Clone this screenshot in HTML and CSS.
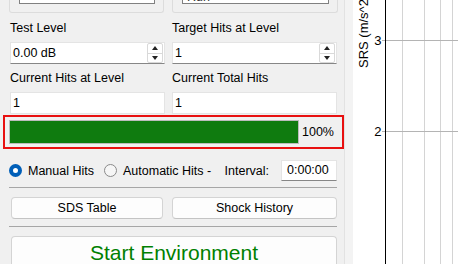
FILE: index.html
```html
<!DOCTYPE html>
<html lang="en">
<head>
  <meta charset="UTF-8" />
  <title>Shock Control</title>
  <link rel="stylesheet" href="styles.css">
</head>
<body>
  <div class="window">
    <div class="panel">
      <div class="groups">
        <div class="group g1"><div class="inner"></div></div>
        <div class="group g2"><div class="inner"><span class="combo-text">Run</span></div></div>
      </div>

      <div class="fields">
        <div class="label">Test Level</div>
        <div class="label">Target Hits at Level</div>
        <div class="spin">
          <span>0.00 dB</span>
          <div class="arrows"><i class="up"></i><i class="down"></i></div>
        </div>
        <div class="spin">
          <span>1</span>
          <div class="arrows"><i class="up"></i><i class="down"></i></div>
        </div>
        <div class="label">Current Hits at Level</div>
        <div class="label">Current Total Hits</div>
        <div class="field">1</div>
        <div class="field">1</div>
      </div>

      <div class="progress-frame">
        <div class="bar"><div class="fill" style="width: 100%"></div></div>
        <span class="percent">100%</span>
      </div>

      <div class="mode-row">
        <span class="radio checked"></span>
        <span class="radio-label">Manual Hits</span>
        <span class="radio"></span>
        <span class="radio-label">Automatic Hits -</span>
        <span class="interval">Interval:</span>
        <div class="time">0:00:00</div>
      </div>

      <div class="sep"></div>

      <div class="buttons">
        <button class="btn sds">SDS Table</button>
        <button class="btn history">Shock History</button>
      </div>

      <div class="sep second"></div>

      <button class="btn start">Start Environment</button>
    </div>

    <div class="splitter"></div>

    <div class="plot">
      <svg width="105" height="264" viewBox="0 0 105 264">
        <!-- vertical grid (log frequency) -->
        <g stroke="#d4d4d4" stroke-width="1">
          <line x1="49.5" y1="0" x2="49.5" y2="264" />
          <line x1="71.5" y1="0" x2="71.5" y2="264" />
          <line x1="87.5" y1="0" x2="87.5" y2="264" />
          <line x1="99.5" y1="0" x2="99.5" y2="264" />
        </g>
        <!-- horizontal grid -->
        <g stroke="#b4b4b4" stroke-width="1">
          <line x1="29" y1="40.5" x2="105" y2="40.5" />
          <line x1="29" y1="131.5" x2="105" y2="131.5" />
        </g>
        <line x1="32.5" y1="0" x2="32.5" y2="264" stroke="#000" stroke-width="1" />
        <g class="tick">
          <text x="28.5" y="45" text-anchor="end">3</text>
          <text x="28.5" y="136" text-anchor="end">2</text>
        </g>
        <text class="axis-label" transform="translate(14.5 68) rotate(-90)">SRS (m/s^2)</text>
      </svg>
    </div>
  </div>
</body>
</html>
```

FILE: styles.css
```css
body {
  margin: 0;
  font-family: "Liberation Sans", Arial, sans-serif;
  font-size: 12.5px;
  color: #000;
  background-color: #f0f0f0;
}
.window {
  display: flex;
  width: 458px;
  height: 264px;
  overflow: hidden;
}
.panel {
  width: 344px;
  flex: none;
  background-color: #f0f0f0;
}

/* group boxes cut off at the top */
.groups {
  display: flex;
  height: 13px;
  margin-left: 9px;
  gap: 8px;
}
.group {
  box-sizing: border-box;
  height: 13px;
  border: 1px solid #dcdcdc;
  border-top: none;
  border-radius: 0 0 3px 3px;
}
.g1 {
  width: 155px;
}
.g2 {
  width: 166px;
}
.inner {
  box-sizing: border-box;
  height: 4px;
  margin: 0 8px 0 9px;
  border: 1px solid #808080;
  border-top: none;
  background-color: #fff;
  overflow: hidden;
  position: relative;
}
.combo-text {
  position: absolute;
  left: 4px;
  bottom: 0;
  line-height: 12px;
  color: #333;
}

/* spin boxes and line edits */
.fields {
  display: grid;
  grid-template-columns: 155px 165px;
  grid-template-rows: 14px 22px 14px 22px;
  column-gap: 7px;
  row-gap: 7px;
  margin: 8px 0 0 10px;
}
.label {
  line-height: 14px;
  white-space: nowrap;
}
.spin,
.field {
  box-sizing: border-box;
  display: flex;
  align-items: center;
  background-color: #fff;
  border: 1px solid #e4e4e4;
  padding-left: 2px;
}
.spin {
  border-bottom-color: #868686;
  justify-content: space-between;
  padding-right: 1px;
}
.arrows {
  display: flex;
  flex-direction: column;
  width: 14px;
  height: 18px;
  border: 1px solid #d9d9d9;
  border-radius: 2px;
}
.arrows i {
  flex: 1;
  display: flex;
  align-items: center;
  justify-content: center;
}
.arrows i.up {
  border-bottom: 1px solid #d9d9d9;
}
.arrows i::before {
  content: "";
  border-left: 3px solid transparent;
  border-right: 3px solid transparent;
}
.arrows i.up::before {
  border-bottom: 4px solid #222;
}
.arrows i.down::before {
  border-top: 4px solid #222;
}

/* progress */
.progress-frame {
  box-sizing: border-box;
  display: flex;
  align-items: center;
  width: 341px;
  height: 34px;
  margin: 1px 0 0 3px;
  padding-left: 4px;
  border: 2px solid #e81010;
}
.bar {
  box-sizing: border-box;
  width: 290px;
  height: 24px;
  border: 1px solid #bcbcbc;
  background-color: #e6e6e6;
}
.fill {
  height: 100%;
  background-color: #0f7b0f;
}
.percent {
  margin-left: 3px;
}

/* hit mode */
.mode-row {
  display: flex;
  align-items: center;
  width: 328px;
  height: 21px;
  margin: 11px 0 0 9px;
}
.radio {
  box-sizing: border-box;
  width: 13px;
  height: 13px;
  border-radius: 50%;
  border: 1px solid #8a8a8a;
  background-color: #f6f6f6;
  flex: none;
}
.radio.checked {
  border: 4px solid #005fb8;
  background-color: #fff;
}
.radio-label {
  margin: 0 10px 0 6px;
  white-space: nowrap;
}
.interval {
  margin-left: auto;
  margin-right: 12px;
}
.time {
  box-sizing: border-box;
  width: 56px;
  height: 21px;
  padding-left: 5px;
  line-height: 19px;
  background-color: #fff;
  border: 1px solid #e4e4e4;
  border-bottom-color: #868686;
}

.sep {
  width: 328px;
  height: 1px;
  margin: 6px 0 0 9px;
  background-color: #a6a6a6;
}
.sep.second {
  margin-top: 7px;
}

.buttons {
  display: flex;
  gap: 9px;
  margin: 9px 0 0 11px;
}
.btn {
  box-sizing: border-box;
  font-family: inherit;
  font-size: 12.5px;
  color: #000;
  background-color: #fdfdfd;
  border: 1px solid #d4d4d4;
  border-bottom-color: #c4c4c4;
  border-radius: 4px;
  padding: 0;
}
.sds {
  width: 152px;
  height: 22px;
}
.history {
  width: 165px;
  height: 22px;
}
.start {
  display: block;
  width: 326px;
  height: 44px;
  margin: 9px 0 0 11px;
  padding-bottom: 10px;
  font-size: 21px;
  color: #008000;
}

.splitter {
  width: 8px;
  flex: none;
  border-left: 1px solid #e2e2e2;
  background-color: #f3f3f3;
}
.plot {
  flex: 1;
  background-color: #fff;
}
.plot svg {
  display: block;
}
.tick text,
.axis-label {
  font-family: "Liberation Sans", Arial, sans-serif;
  font-size: 13px;
  fill: #000;
}
```
